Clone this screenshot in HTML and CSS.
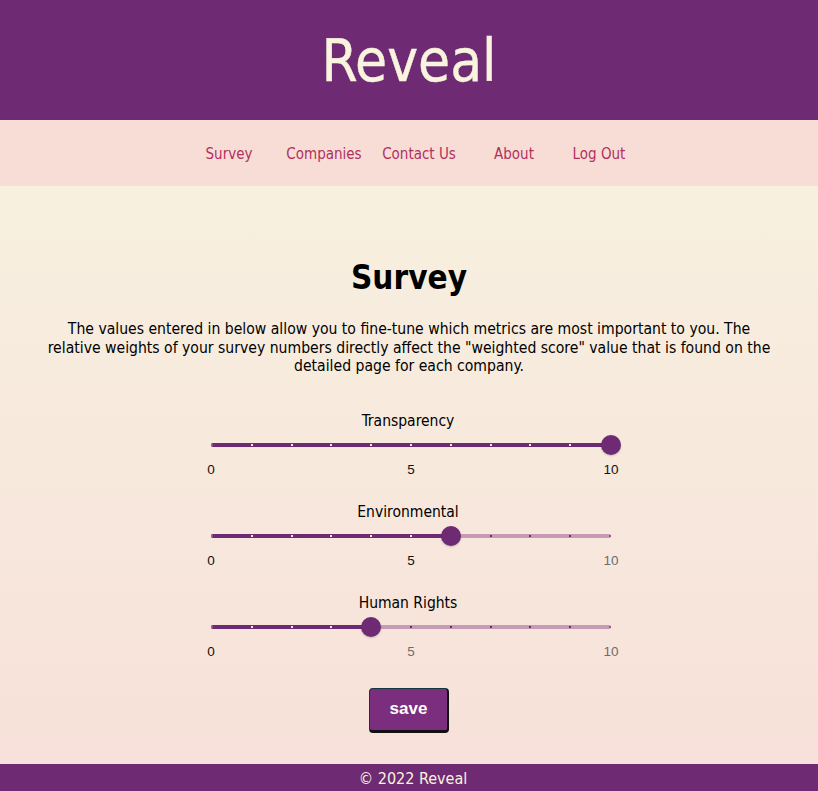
FILE: index.html
```html
<!DOCTYPE html>
<html>
<head>
<meta charset="utf-8">
<link rel="stylesheet" href="styles.css">
</head>
<body>
<header class="top">
  <h1 class="brand">Reveal</h1>
</header>
<nav class="nav">
  <a class="nav-link" href="#">Survey</a>
  <a class="nav-link" href="#">Companies</a>
  <a class="nav-link" href="#">Contact Us</a>
  <a class="nav-link" href="#">About</a>
  <a class="nav-link last" href="#">Log Out</a>
</nav>
<main class="main">
  <h2 class="title">Survey</h2>
  <p class="intro">The values entered in below allow you to fine-tune which metrics are most important to you. The relative weights of your survey numbers directly affect the "weighted score" value that is found on the detailed page for each company.</p>

  <div class="slider-block">
    <div class="slider-label">Transparency</div>
    <div class="slider">
      <div class="track"></div>
      <div class="fill" style="width:100%"></div>
      <div class="ticks">
        <span class="tick on"></span><span class="tick on"></span><span class="tick on"></span><span class="tick on"></span><span class="tick on"></span><span class="tick on"></span><span class="tick on"></span><span class="tick on"></span><span class="tick on"></span><span class="tick on"></span><span class="tick on"></span>
      </div>
      <div class="thumb" style="left:100%"></div>
    </div>
    <div class="scale"><span class="num on">0</span><span class="num on">5</span><span class="num on">10</span></div>
  </div>

  <div class="slider-block">
    <div class="slider-label">Environmental</div>
    <div class="slider">
      <div class="track"></div>
      <div class="fill" style="width:60%"></div>
      <div class="ticks">
        <span class="tick on"></span><span class="tick on"></span><span class="tick on"></span><span class="tick on"></span><span class="tick on"></span><span class="tick on"></span><span class="tick on"></span><span class="tick"></span><span class="tick"></span><span class="tick"></span><span class="tick"></span>
      </div>
      <div class="thumb" style="left:60%"></div>
    </div>
    <div class="scale"><span class="num on">0</span><span class="num on">5</span><span class="num">10</span></div>
  </div>

  <div class="slider-block">
    <div class="slider-label">Human Rights</div>
    <div class="slider">
      <div class="track"></div>
      <div class="fill" style="width:40%"></div>
      <div class="ticks">
        <span class="tick on"></span><span class="tick on"></span><span class="tick on"></span><span class="tick on"></span><span class="tick on"></span><span class="tick"></span><span class="tick"></span><span class="tick"></span><span class="tick"></span><span class="tick"></span><span class="tick"></span>
      </div>
      <div class="thumb" style="left:40%"></div>
    </div>
    <div class="scale"><span class="num on">0</span><span class="num">5</span><span class="num">10</span></div>
  </div>

  <button class="save" type="button">save</button>
</main>
<footer class="foot">© 2022 Reveal</footer>
</body>
</html>
```

FILE: styles.css
```css
* { box-sizing: border-box; }
html, body { margin: 0; padding: 0; }
body {
  font-family: "DejaVu Sans Condensed", "DejaVu Sans", sans-serif;
  color: #000;
  background: #f7e2da;
}
.top {
  background: #6e2a73;
  height: 120px;
  display: flex;
  align-items: center;
  justify-content: center;
}
.brand {
  margin: 0;
  font-weight: normal;
  font-size: 58px;
  color: #f8f4de;
  line-height: 1;
  padding-top: 2px;
  -webkit-text-stroke: 0.4px #f8f4de;
}
.nav {
  background: #f8ddd6;
  height: 66px;
  display: flex;
  justify-content: center;
  align-items: center;
  padding-top: 1px;
}
.nav-link {
  width: 95px;
  text-align: center;
  color: #b0305f;
  text-decoration: none;
  font-size: 15px;
}
.nav-link.last { width: 75px; }
.main {
  background: linear-gradient(#f7f0df, #f7e1da);
  height: 578px;
  display: flex;
  flex-direction: column;
  align-items: center;
  padding-top: 73px;
}
.title {
  margin: 0;
  font-size: 33px;
  font-weight: bold;
  line-height: 38px;
}
.intro {
  margin: 23px 0 0;
  width: 724px;
  text-align: center;
  font-size: 15.6px;
  line-height: 18.5px;
}
.slider-block {
  width: 424px;
  padding-left: 4px;
  display: flex;
  flex-direction: column;
  align-items: center;
  margin-top: 36px;
}
.slider-block + .slider-block { margin-top: 26px; }
.slider-label {
  font-size: 15.5px;
  line-height: 18px;
  margin-right: 6px;
}
.slider {
  position: relative;
  width: 400px;
  height: 20px;
  margin-top: 5px;
}
.track {
  position: absolute;
  left: 0; right: 0;
  top: 8px;
  height: 4px;
  background: #c79ab5;
  border-radius: 2px;
}
.fill {
  position: absolute;
  left: 0;
  top: 8px;
  height: 4px;
  background: #6e2a73;
  border-radius: 2px;
}
.ticks {
  position: absolute;
  left: 0; right: 0;
  top: 9px;
  height: 2px;
  display: flex;
  justify-content: space-between;
}
.tick {
  width: 2px;
  height: 2px;
  background: #6e2a73;
}
.tick.on { background: #f6eee6; }
.tick:first-child, .tick:last-child { background: #9a5a95; }
.thumb {
  position: absolute;
  top: 0;
  width: 20px;
  height: 20px;
  margin-left: -10px;
  border-radius: 50%;
  background: #6e2a73;
  box-shadow: 0 1px 2px rgba(0,0,0,0.2);
}
.scale {
  width: 420px;
  display: flex;
  justify-content: space-between;
  margin-top: 7px;
  font-family: "Liberation Sans", Arial, sans-serif;
  font-size: 13.5px;
  line-height: 15px;
}
.num { width: 20px; text-align: center; color: #6d6d6d; }
.num.on { color: #111; }
.save {
  margin-top: 29px;
  width: 80px;
  height: 45px;
  background: #7a2e7d;
  color: #fff;
  font-family: "Liberation Sans", Arial, sans-serif;
  font-weight: bold;
  font-size: 17px;
  border: 1px solid #0e3a3a;
  border-bottom: 3px solid #111;
  border-right: 2px solid #111;
  border-radius: 4px;
  padding: 0 0 1px;
}
.foot {
  background: #6e2a73;
  height: 27px;
  color: #f8f4de;
  text-align: center;
  font-size: 16px;
  line-height: 30px;
  padding-left: 8px;
}
```
